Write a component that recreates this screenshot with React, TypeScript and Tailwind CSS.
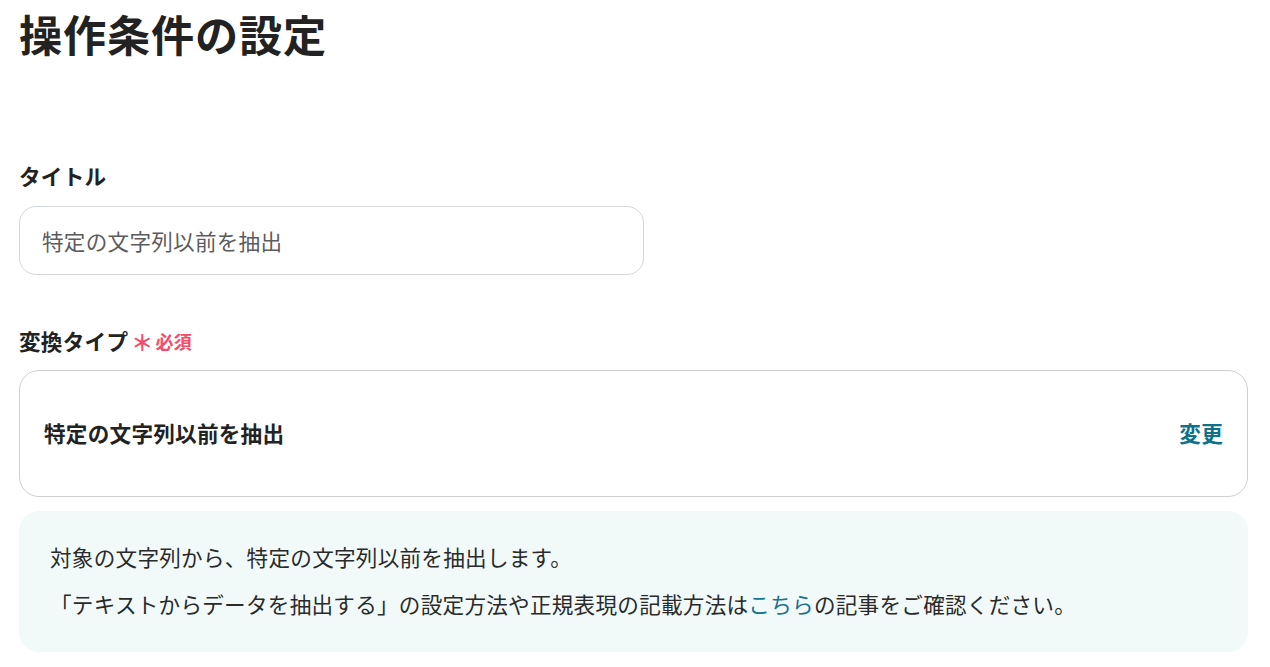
export default function App() {
  return (
    <div
      className="min-h-screen bg-white pl-[19px] pr-[22px] tracking-[0.25px] text-[#222222]"
      style={{ fontFamily: '"Noto Sans CJK JP", "Noto Sans", sans-serif' }}
    >
      <h1 className="pt-[8px] text-[43.2px] font-bold leading-[1.2] tracking-[0.8px]">操作条件の設定</h1>

      <section className="mt-[100px]">
        <label className="block text-[21.6px] font-bold leading-[32px]">タイトル</label>
        <input
          type="text"
          readOnly
          placeholder="特定の文字列以前を抽出"
          className="mt-[14px] h-[69px] w-[625px] rounded-[17px] border border-[#d3d7dd] bg-white px-[22px] text-[21.6px] tracking-[0.25px] text-[#555] outline-none placeholder:text-[#5c5c5c]"
        />
      </section>

      <section className="mt-[50px]">
        <div className="flex items-center gap-[3px] leading-[32px]">
          <span className="text-[21.6px] font-bold">変換タイプ</span>
          <span className="flex items-center text-[18px] font-bold text-[#f54b68]">
            <span className="mr-[2px] text-[22px] font-bold leading-none">＊</span>必須
          </span>
        </div>
        <div className="mt-[13px] flex h-[127px] items-center justify-between rounded-[20px] border border-[#cfcfcf] px-[24px]">
          <span className="text-[21.6px] font-bold">特定の文字列以前を抽出</span>
          <button type="button" className="text-[21.6px] font-bold tracking-[0.25px] text-[#10718a]">
            変更
          </button>
        </div>
        <div className="mt-[14px] rounded-[20px] bg-[#f1faf9] pb-[32px] pl-[31px] pr-[24px] pt-[30px] text-[21.6px] leading-[32px] text-[#2a2a2a]">
          <p>対象の文字列から、特定の文字列以前を抽出します。</p>
          <p className="mt-[15px]">
            「テキストからデータを抽出する」の設定方法や正規表現の記載方法は
            <a href="#" className="text-[#1a7390]">
              こちら
            </a>
            の記事をご確認ください。
          </p>
        </div>
      </section>
    </div>
  );
}
